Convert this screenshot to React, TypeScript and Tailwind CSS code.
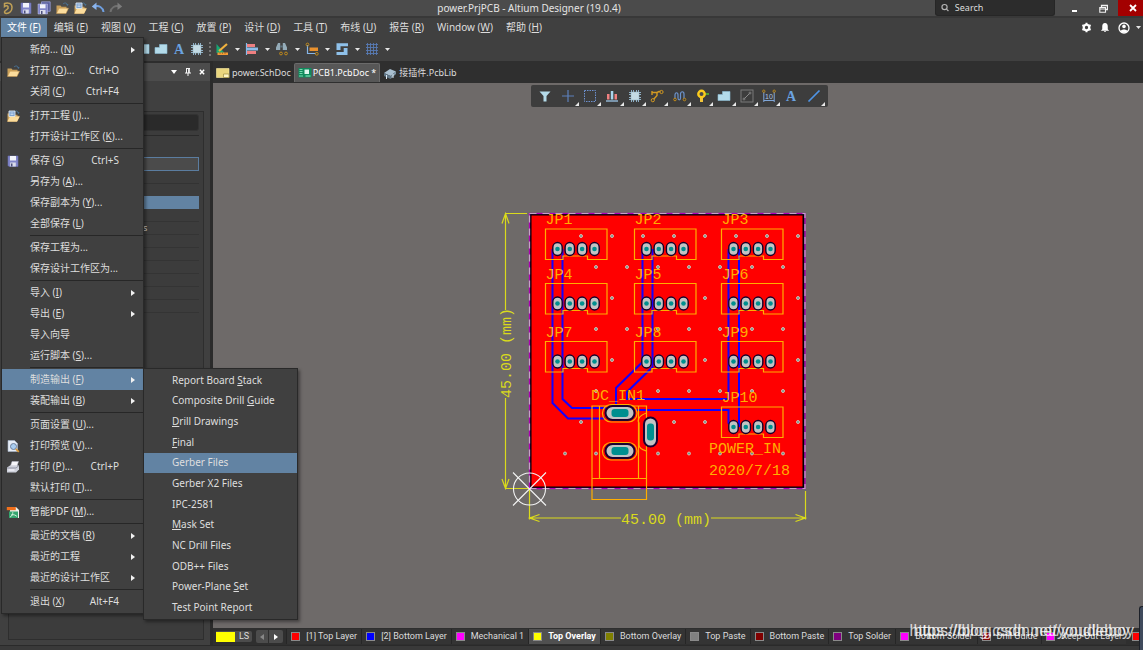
import React from "react";

type Item = { label: string; keys?: string; icon?: string; sub?: boolean; active?: boolean };

const FILE_GROUPS: Item[][] = [
  [
    { label: "新的... (&N)", sub: true },
    { label: "打开 (&O)...", keys: "Ctrl+O", icon: "open" },
    { label: "关闭 (&C)", keys: "Ctrl+F4" },
  ],
  [{ label: "打开工程 (&J)...", icon: "project" }, { label: "打开设计工作区 (&K)..." }],
  [
    { label: "保存 (&S)", keys: "Ctrl+S", icon: "save" },
    { label: "另存为 (&A)..." },
    { label: "保存副本为 (&Y)..." },
    { label: "全部保存 (&L)" },
  ],
  [{ label: "保存工程为..." }, { label: "保存设计工作区为..." }],
  [
    { label: "导入 (&I)", sub: true },
    { label: "导出 (&E)", sub: true },
    { label: "导入向导" },
    { label: "运行脚本 (&S)..." },
  ],
  [
    { label: "制造输出 (&F)", sub: true, active: true },
    { label: "装配输出 (&B)", sub: true },
  ],
  [
    { label: "页面设置 (&U)..." },
    { label: "打印预览 (&V)...", icon: "preview" },
    { label: "打印 (&P)...", keys: "Ctrl+P", icon: "print" },
    { label: "默认打印 (&T)..." },
  ],
  [{ label: "智能PDF (&M)...", icon: "pdf" }],
  [
    { label: "最近的文档 (&R)", sub: true },
    { label: "最近的工程", sub: true },
    { label: "最近的设计工作区", sub: true },
  ],
  [{ label: "退出 (&X)", keys: "Alt+F4" }],
];

const FAB_ITEMS = [
  "Report Board &Stack",
  "Composite Drill &Guide",
  "&Drill Drawings",
  "&Final",
  "Gerber Files",
  "Gerber X2 Files",
  "IPC-2581",
  "&Mask Set",
  "NC Drill Files",
  "ODB++ Files",
  "Power-Plane &Set",
  "Test Point Report",
];

const MENUS = [
  "编辑 (&E)",
  "视图 (&V)",
  "工程 (&C)",
  "放置 (&P)",
  "设计 (&D)",
  "工具 (&T)",
  "布线 (&U)",
  "报告 (&R)",
  "Window (&W)",
  "帮助 (&H)",
];

const LAYERS = [
  { name: "[1] Top Layer", box: "bg-[#ff0000]" },
  { name: "[2] Bottom Layer", box: "bg-[#0000ff]" },
  { name: "Mechanical 1", box: "bg-[#ff00ff]" },
  { name: "Top Overlay", box: "bg-[#ffff00]", active: true },
  { name: "Bottom Overlay", box: "bg-[#808000]" },
  { name: "Top Paste", box: "bg-[#808080]" },
  { name: "Bottom Paste", box: "bg-[#800000]" },
  { name: "Top Solder", box: "bg-[#800080]" },
  { name: "Bottom Solder", box: "bg-[#ff00ff]" },
  { name: "Drill Guide", box: "bg-[#800000]" },
  { name: "Keep-Out Layer", box: "bg-[#ff00ff]" },
];

function Label({ text }: { text: string }) {
  const i = text.indexOf("&");
  if (i < 0) return <>{text}</>;
  return (
    <>
      {text.slice(0, i)}
      <span className="underline underline-offset-1">{text[i + 1]}</span>
      {text.slice(i + 2)}
    </>
  );
}

function Icon({ name, className = "size-[14px]" }: { name: string; className?: string }) {
  return (
    <svg viewBox="0 0 14 14" className={`shrink-0 ${className}`} fill="none" aria-hidden="true">
      {ICONS[name]}
    </svg>
  );
}

const folder = (
  <>
    <path d="M1.5 12V4.5h4l1 1.2h5V8" fill="#c9a05a" />
    <path d="M1.5 12.5 4 7.2h9.5L11 12.5z" fill="#fbdc9c" stroke="#c9974c" strokeWidth=".5" />
    <path d="M8 3c2-1.800 4-1 4.500 1" stroke="#4a7396" />
    <path d="m11 3.500 1.700 1.600.8-2.200z" fill="#4a7396" />
  </>
);
const floppy = (
  <>
    <path d="M2 2h10v10.500H3L2 11.500z" fill="#8185c9" stroke="#6a6fae" strokeWidth=".6" />
    <path d="M4 2h6v4.500H4z" fill="#f3f4fb" />
    <path d="M4.200 8.500h5.600v4H4.200z" fill="#dadcea" />
    <path d="M5 9.500h1.500v3H5z" fill="#4b4f7d" />
  </>
);
const chip = (
  <>
    <path
      d="M3.500 1v12M5.500 1v12M8.500 1v12M10.500 1v12M1 3.500h12M1 5.500h12M1 8.500h12M1 10.500h12"
      stroke="#8fb0c6"
      strokeWidth="1"
    />
    <rect x="2.800" y="2.800" width="8.400" height="8.400" rx="1" fill="#a9c6d4" />
    <rect x="3.500" y="3.500" width="7" height="7" fill="#c4dbe4" />
  </>
);
const poly = <path d="M1 5.500h4.500V2.500h7.500v9H1z" fill="#b4dbea" stroke="#8fc0d6" strokeWidth=".6" />;
const letterA = (
  <text
    x="7"
    y="12"
    textAnchor="middle"
    fontSize="14"
    fontWeight="bold"
    fill="#6ba3e0"
    fontFamily="Liberation Serif, serif"
  >
    A
  </text>
);

const ICONS: Record<string, React.ReactNode> = {
  open: folder,
  project: (
    <>
      {folder}
      <path d="M3 2h6v5.500H3z" fill="#7aa0cf" stroke="#dfe9f5" strokeWidth=".9" />
      <path d="M4.500 4h3M4.500 5.600h3" stroke="#e8f0fa" strokeWidth=".7" />
      <path d="M1.500 12.500 4 7.800h9.500L11 12.500z" fill="#fbdc9c" />
    </>
  ),
  save: floppy,
  saveAll: (
    <>
      <path d="M4.500.8h8.700v9.500H4.500z" fill="#5a5f9c" stroke="#a2a6de" strokeWidth=".7" />
      <path d="M1 3h9.500v10H1z" fill="#8185c9" stroke="#c2c4ea" strokeWidth=".5" />
      <path d="M3 3.300h5.500v4H3z" fill="#f3f4fb" />
      <path d="M3 9h5.500v4H3z" fill="#dadcea" />
      <path d="M4 10h1.500v3H4z" fill="#4b4f7d" />
    </>
  ),
  logo: (
    <path
      d="M3.500 2.500C7 1 11 2.500 11 6.500c0 3.500-2.500 6-5.500 6C3.500 12.500 3 11 4 10l3-2.500V5.500c-.5-1-2.500-1-3.500 0z"
      stroke="#bfa057"
      strokeWidth="1.500"
    />
  ),
  undo: (
    <>
      <path d="M3 5.500c5-1.500 9 1 9.500 5.500" stroke="#6f9fe0" strokeWidth="2" />
      <path d="M.8 5.500 5.500 1.500v7.500z" fill="#8bb4ec" />
    </>
  ),
  redo: (
    <>
      <path d="M11 5.500c-5-1.500-9 1-9.500 5.500" stroke="#707070" strokeWidth="2" />
      <path d="M13.200 5.500 8.500 1.500v7.500z" fill="#7c7c7c" />
    </>
  ),
  preview: (
    <>
      <path d="M2 1.500h6.500l3 3v8H2z" fill="#e6edf7" stroke="#a8b5c9" strokeWidth=".6" />
      <circle cx="7.500" cy="7.500" r="3" fill="#a9cdf0" stroke="#6c7f9c" />
      <path d="m9.800 9.800 3 3" stroke="#d99a3a" strokeWidth="1.800" />
    </>
  ),
  print: (
    <>
      <path d="M4.500 6 6 1.500h6.500L11 6z" fill="#f7f7fb" stroke="#b5b7c4" strokeWidth=".5" />
      <path d="M1 7.500 4 5.500h9v4l-3 3H1z" fill="#cfd2dc" />
      <path d="M1 8h9l3-2.500" stroke="#7d8090" strokeWidth=".7" />
      <path d="M2.500 10h6" stroke="#f8f8ff" strokeWidth="1.200" />
    </>
  ),
  pdf: (
    <>
      <path d="M4 2h6l3 3v8H4z" fill="#eef3f0" />
      <path d="M0.800 2h9v3.200h-9z" fill="#f0701d" />
      <rect x="3" y="6.500" width="9" height="6.500" fill="#36a56f" />
      <path d="M4 12c3-1 3-5 2.500-5M5 10c3-1 5 .5 6 1.500" stroke="#d5f5e0" />
    </>
  ),
  poly,
  letterA,
  chip,
  draw: (
    <>
      <path d="M1.500 2v9h8z" fill="#18a774" />
      <path d="m4 9 8-7" stroke="#f0b13e" strokeWidth="2.200" />
      <path d="M2.500 10.500h10.500v2.500H2.500z" fill="#f29a35" />
      <path d="M5 10.500v1.300M7.500 10.500v1.300M10 10.500v1.300" stroke="#7e4a12" strokeWidth=".7" />
    </>
  ),
  align: (
    <>
      <path d="M1.500 1v12" stroke="#85bcec" strokeWidth="1.200" />
      <path d="M2 2h8v3H2zM2 9h9v3H2z" fill="#ee7f80" />
      <path d="M2 5.500h11v3H2z" fill="#8dbce8" />
    </>
  ),
  find: (
    <>
      <path d="M3 1h2.200v7H1V5.500zM7.800 1H10l2 4.500V8H7.800z" fill="#94abb8" />
      <path d="M5.200 3.500h2.600v2H5.200z" fill="#5f7480" />
      <circle cx="6" cy="11.500" r="1.400" stroke="#c08a1b" />
      <circle cx="11" cy="11.500" r="1.400" stroke="#c08a1b" />
    </>
  ),
  dim: (
    <>
      <path d="M2.500 3v8.500h8" stroke="#86b5e6" strokeWidth="1.200" />
      <path d="M4.500 5.500h8.500v3.500H4.500z" fill="#e9912e" />
      <circle cx="2.500" cy="2.500" r="1.400" stroke="#c08a1b" />
      <circle cx="11.800" cy="11.800" r="1.400" stroke="#c08a1b" />
    </>
  ),
  room: (
    <>
      <path d="M1.500 1.200h11.500v3H5.500V8h-4z" fill="#8fc1ea" />
      <path d="M12.500 13H1.500v-3h7.200V6h3.800z" fill="#8fc1ea" />
    </>
  ),
  grid: (
    <path
      d="M2.500 1v12M5.500 1v12M8.500 1v12M11.500 1v12M1 2.500h12M1 5.500h12M1 8.500h12M1 11.500h12"
      stroke="#587bb4"
      strokeWidth=".9"
    />
  ),
  sch: (
    <>
      <path d="M.5 2.500h12.500v9H.500z" fill="#ead67e" stroke="#fff0a5" strokeWidth=".6" />
      <path d="M7.500 8H13v3.500H7.500z" fill="#fff6c4" stroke="#9b8a3e" strokeWidth=".7" />
    </>
  ),
  pcb: (
    <>
      <path d="M.5 2h13v9.500H.5z" fill="#108a5c" />
      <path d="M1.500 3.500h3M1.500 5.500h3M1.500 7.500h3M2 9v2M4 9v2" stroke="#8ff0c4" strokeWidth=".8" />
      <path d="M6.500 3.500H11V8H6.500z" fill="#dff7ee" />
      <path d="M7.500 10h5" stroke="#8ff0c4" />
    </>
  ),
  lib: (
    <>
      <path d="m1 7 6-4 6 2.500L7.500 10z" fill="#a9bfd0" />
      <path d="m1 7 6.500 3v3L1 10z" fill="#5f7688" />
      <path d="M7.500 10 13 5.500V8l-5.500 5z" fill="#7e96a8" />
      <path d="M3.500 9v4M10 8v4" stroke="#dbe8f2" />
    </>
  ),
  funnel: <path d="M1.500 2.500h11L8.500 7v5.500h-3V7z" fill="#b4dbea" />,
  plus: <path d="M7 1v12M1 7h12" stroke="#5d80bb" strokeWidth="1.200" />,
  marquee: <rect x="1.500" y="1.500" width="11" height="11" stroke="#6d90cf" strokeDasharray="1.500 1" />,
  bars: (
    <>
      <path d="M2 5h2.500v5.500H2zM9.500 5H12v5.500H9.500z" fill="#f08080" />
      <path d="M5.800 2h2.500v8.500H5.800z" fill="#a9d5ee" />
      <path d="M1 12h12" stroke="#9cc6e8" strokeWidth="1.300" />
    </>
  ),
  route: (
    <>
      <path d="M2 3.500h5L9 2.500h2M3.500 10.500 7 6.500V3.500M2 2v4" stroke="#d39a22" strokeWidth="1.400" />
      <circle cx="2.800" cy="11.200" r="1.600" stroke="#d39a22" fill="#3d3d3d" />
      <circle cx="11.500" cy="3" r="1.600" stroke="#d39a22" fill="#3d3d3d" />
    </>
  ),
  wave: (
    <>
      <path d="M2 10V6c0-3 3-3 3 0v3c0 2.500 2.500 2.500 2.500 0V5c0-3 3.500-3 3.500 0v5" stroke="#6c93cc" strokeWidth="1.200" />
      <circle cx="2" cy="10.500" r="1.300" stroke="#c08a1b" fill="#3d3d3d" />
      <circle cx="11.500" cy="10.500" r="1.300" stroke="#c08a1b" fill="#3d3d3d" />
    </>
  ),
  via: (
    <>
      <path d="M8 5h6" stroke="#55b535" strokeWidth="1.600" />
      <path d="M5 7h3v6H5z" fill="#f3c63b" />
      <circle cx="6.500" cy="5" r="3.200" stroke="#fccc1c" strokeWidth="2.400" fill="#4a4a4a" />
    </>
  ),
  keepout: (
    <>
      <rect x="1" y="1" width="12" height="12" stroke="#7a7a7a" />
      <path d="m4.500 9.500 5-5" stroke="#8a8a8a" />
      <circle cx="4" cy="10" r="1" stroke="#8a8a8a" strokeWidth=".8" />
      <circle cx="10" cy="4" r="1" stroke="#8a8a8a" strokeWidth=".8" />
    </>
  ),
  measure: (
    <>
      <path d="M1.800 3v10M12.200 3v10M1.800 11.500h10.400" stroke="#7fa6d8" />
      <circle cx="1.800" cy="2.200" r="1.200" stroke="#c08a1b" strokeWidth=".9" />
      <circle cx="12.200" cy="2.200" r="1.200" stroke="#c08a1b" strokeWidth=".9" />
      <text x="7" y="9.500" textAnchor="middle" fontSize="7" fill="#a8c4e8" fontFamily="Liberation Sans, sans-serif">
        10
      </text>
    </>
  ),
  line: <path d="M1.500 12.500l11-11" stroke="#4f94e6" strokeWidth="1.700" />,
};

const Caret = () => (
  <svg viewBox="0 0 5 3" className="h-[3px] w-[5px] shrink-0" aria-hidden="true">
    <path d="M0 0h5L2.500 3z" fill="#e6e6e6" />
  </svg>
);

function TitleBar() {
  const tools: [string, string][] = [
    ["logo", "Altium"],
    ["save", "保存"],
    ["saveAll", "全部保存"],
    ["open", "打开"],
    ["project", "打开工程"],
    ["undo", "撤销"],
    ["redo", "重做"],
  ];
  return (
    <header className="flex h-4 items-center bg-[#4b4b4b] text-[10px] text-[#e4e4e4]">
      <div className="flex gap-1 pl-px">
        {tools.map(([icon, name]) => (
          <button key={name} aria-label={name} className="flex">
            <Icon name={icon} />
          </button>
        ))}
      </div>
      <h1 className="flex-1 text-center leading-4">power.PrjPCB - Altium Designer (19.0.4)</h1>
      <label className="mr-[5px] flex h-4 w-[120px] items-center gap-[6px] rounded-b-[3px] border border-t-0 border-[#262626] bg-[#2c2c2c] px-[5px]">
        <svg viewBox="0 0 10 10" className="size-[9px]" fill="none" aria-hidden="true">
          <circle cx="4.500" cy="4.500" r="3.300" stroke="#b5b5b5" strokeWidth="1.500" />
          <path d="m7 7 2.500 2.500" stroke="#b5b5b5" strokeWidth="1.500" />
        </svg>
        <input
          aria-label="Search"
          placeholder="Search"
          className="w-full min-w-0 bg-transparent text-[9px] leading-[14px] outline-none placeholder:text-[#dcdcdc]"
        />
      </label>
      <button aria-label="Minimize" className="flex h-4 w-[29px] items-end justify-center pb-1">
        <span className="h-[2px] w-[5px] bg-white" />
      </button>
      <button aria-label="Restore" className="flex h-4 w-[29px] items-center justify-center">
        <svg viewBox="0 0 9 9" className="size-[9px]" fill="none" stroke="#f2f2f2" aria-hidden="true">
          <path d="M2.500 3V1.500h6v4H7" strokeWidth="1.300" />
          <path d="M.800 3.500h5.700v4.700H.800z" strokeWidth="1.100" />
          <path d="M.800 5h5.700" />
        </svg>
      </button>
      <button aria-label="Close" className="flex h-4 w-[25px] items-center justify-center bg-[#a30000]">
        <svg viewBox="0 0 8 8" className="mr-[-4px] size-2" stroke="#fff" strokeWidth="1.800" aria-hidden="true">
          <path d="m1 1 6 6M7 1 1 7" />
        </svg>
      </button>
    </header>
  );
}

function FabricationMenu() {
  return (
    <div
      role="menu"
      className="absolute -top-px left-full z-20 grid h-[252px] w-[155px] auto-rows-fr border border-[#292929] bg-[#404040] py-px shadow-[2px_2px_3px_rgba(0,0,0,0.4)]"
    >
      {FAB_ITEMS.map((t) => (
        <button
          key={t}
          role="menuitem"
          className={`flex items-center pl-7 text-left ${t === "Gerber Files" ? "bg-[#6283a3]" : ""}`}
        >
          <span>
            <Label text={t} />
          </span>
        </button>
      ))}
    </div>
  );
}

function FileMenu() {
  return (
    <div
      role="menu"
      className="absolute left-0 top-full z-10 w-[143px] border border-[#292929] bg-[#404040] py-px text-[#dedede] shadow-[2px_2px_3px_rgba(0,0,0,0.4)]"
    >
      {FILE_GROUPS.map((group, gi) => (
        <div key={gi}>
          {gi > 0 && <div className="my-px ml-7 h-px bg-[#272727]" />}
          {group.map((it) => (
            <div key={it.label} className="relative">
              <button
                role="menuitem"
                className={`flex h-[21px] w-full items-center pr-2 text-left ${it.active ? "bg-[#6283a3]" : ""}`}
              >
                <span className="flex w-7 pl-1">{it.icon && <Icon name={it.icon} />}</span>
                <span className="flex-1 whitespace-nowrap">
                  <Label text={it.label} />
                </span>
                {it.keys && <span className="pr-4">{it.keys}</span>}
                {it.sub && (
                  <svg viewBox="0 0 4 6" className="h-[6px] w-1" aria-hidden="true">
                    <path d="M0 0v6l4-3z" fill="#f2f2f2" />
                  </svg>
                )}
              </button>
              {it.active && <FabricationMenu />}
            </div>
          ))}
        </div>
      ))}
    </div>
  );
}

function MenuBar() {
  return (
    <nav className="flex h-[21px] items-stretch gap-px border-t-2 border-[#383838] bg-[#404040] pl-px text-[10px] text-[#dedede]">
      <div className="relative">
        <button className="h-[19px] bg-[#6283a3] px-[6px] text-white">
          <Label text="文件 (&F)" />
        </button>
        <FileMenu />
      </div>
      {MENUS.map((m) => (
        <button key={m} className="px-[6px] whitespace-nowrap">
          <Label text={m} />
        </button>
      ))}
      <div className="ml-auto flex items-center gap-2 pr-[2px]">
        <button aria-label="Settings">
          <svg viewBox="0 0 12 12" className="size-[11px]" aria-hidden="true">
            <circle cx="6" cy="6" r="3" fill="none" stroke="#fff" strokeWidth="2.400" />
            <path
              d="M6 .8v1.600M6 9.600v1.600M1.500 3.400l1.400.8M9.100 7.800l1.400.8M1.500 8.600l1.400-.8M9.100 4.200l1.400-.8"
              stroke="#fff"
              strokeWidth="2.200"
            />
          </svg>
        </button>
        <button aria-label="Notifications">
          <svg viewBox="0 0 10 12" className="h-[11px] w-[10px]" fill="#fff" aria-hidden="true">
            <path d="M5 1c2 0 3 1.500 3 3.500V8l1.500 1.500H.5L2 8V4.500C2 2.500 3 1 5 1zM4 10h2v1H4z" />
          </svg>
        </button>
        <button aria-label="Account" className="flex items-center gap-[6px]">
          <svg viewBox="0 0 12 12" className="size-3" aria-hidden="true">
            <circle cx="6" cy="6" r="5" fill="none" stroke="#fff" strokeWidth="1.300" />
            <circle cx="6" cy="4.400" r="1.800" fill="#fff" />
            <path d="M2.500 9c1.500-2 5.500-2 7 0C8 11.200 4 11.200 2.500 9z" fill="#fff" />
          </svg>
          <Caret />
        </button>
      </div>
    </nav>
  );
}

function ToolBar() {
  return (
    <div className="flex h-6 items-center bg-[#404040] pl-[136px]">
      <div className="flex gap-1">
        {["poly", "poly", "letterA", "chip"].map((n, i) => (
          <button key={i} aria-label={n} className="flex">
            <Icon name={n} />
          </button>
        ))}
      </div>
      <span className="ml-[5px] mr-1 h-[14px] border-l-2 border-dotted border-[#777]" />
      <div className="flex gap-[3px]">
        {["draw", "align", "find", "dim", "room", "grid"].map((n) => (
          <button key={n} aria-label={n} className="flex w-[27px] items-center justify-between pr-[2px]">
            <Icon name={n} />
            <Caret />
          </button>
        ))}
      </div>
    </div>
  );
}

function SidePanel() {
  return (
    <aside className="flex w-[213px] shrink-0 flex-col border-r-[3px] border-[#2b2b2b] bg-[#404040]">
      <div className="flex h-[20px] items-center justify-end gap-2 border-t-2 border-[#2d2d2d] bg-[#4c4c4c] pr-[5px]">
        <button aria-label="Panel menu">
          <svg viewBox="0 0 6 4" className="h-1 w-[6px]" aria-hidden="true">
            <path d="M0 0h6L3 4z" fill="#fff" />
          </svg>
        </button>
        <button aria-label="Pin panel">
          <svg viewBox="0 0 6 8" className="h-2 w-[6px]" aria-hidden="true">
            <path d="M1 .5h4M1.500.5V5M4.300.5V5M3.600.5V5M0 5h6M3 5v3" stroke="#f5f5f5" fill="none" />
          </svg>
        </button>
        <button aria-label="Close panel">
          <svg viewBox="0 0 7 7" className="size-[6px]" aria-hidden="true">
            <path d="m1 1 5 5M6 1 1 6" stroke="#fff" strokeWidth="1.700" />
          </svg>
        </button>
      </div>
      <div className="mb-[5px] ml-2 mr-[6px] mt-[30px] flex flex-1 flex-col border border-[#2e2e2e] bg-[#3c3c3c] px-1 pt-[2px]">
        <input aria-label="Filter" className="h-[17px] rounded-[3px] border border-[#333] bg-[#2a2a2a]" />
        <div className="mt-1 h-px bg-[#2a2a2a]" />
        <input aria-label="Value" className="mt-[21px] h-[14px] border border-[#5b7da0] bg-[#4b4b4b]" />
        <div className="mt-3 h-px bg-[#333]" />
        <div className="mt-3 h-[13px] bg-[#6283a3]" />
        <div className="mt-3 h-px bg-[#343434]" />
        <div className="h-[13px] border-b border-[#343434] pl-[130px] text-[9px] leading-[12px] text-[#d0d0d0]">s</div>
        {[0, 1, 2, 3, 4, 5].map((i) => (
          <div key={i} className="h-[13px] border-b border-[#343434]" />
        ))}
      </div>
    </aside>
  );
}

function DocTabs() {
  const tabs = [
    { icon: "sch", name: "power.SchDoc" },
    { icon: "pcb", name: "PCB1.PcbDoc *", active: true },
    { icon: "lib", name: "接插件.PcbLib" },
  ];
  return (
    <div role="tablist" className="flex h-[22px] items-end bg-[#2f2f2f] pb-px pt-[2px] text-[9px] text-[#dcdcdc]">
      {tabs.map((t) => (
        <button
          key={t.name}
          role="tab"
          aria-selected={!!t.active}
          className={`flex h-[19px] items-center px-[3px] whitespace-nowrap ${
            t.active
              ? "gap-px rounded-t-[2px] border border-b-0 border-[#6a6a6a] bg-[#575757] text-white"
              : "gap-[2px]"
          }`}
        >
          <Icon name={t.icon} />
          {t.name}
        </button>
      ))}
    </div>
  );
}

function ActiveBar() {
  const names = [
    "funnel",
    "plus",
    "marquee",
    "bars",
    "chip",
    "route",
    "wave",
    "via",
    "poly",
    "keepout",
    "measure",
    "letterA",
    "line",
  ];
  return (
    <div className="absolute inset-x-0 top-[2px] flex justify-center pl-[3px]">
      <div className="flex h-[22px] w-[297px] rounded-[2px] bg-[#3d3d3d] px-[3px]">
        {names.map((n) => (
          <button key={n} aria-label={n} className="relative flex flex-1 items-center justify-center">
            <Icon name={n} />
            {n !== "funnel" && n !== "letterA" && (
              <svg viewBox="0 0 4 4" className="absolute bottom-px right-0 size-1" aria-hidden="true">
                <path d="M4 0v4H0z" fill="#e8e8e8" />
              </svg>
            )}
          </button>
        ))}
      </div>
    </div>
  );
}

const VIAS: [number, number[]][] = [
  [236, [581, 612, 643, 674, 705, 736, 767, 798]],
  [267, [596, 627, 658, 689, 720, 752, 783]],
  [298, [612, 705, 798]],
  [329, [596, 627, 658, 689, 720, 752, 783]],
  [360, [612, 705, 798]],
  [391, [596, 658, 689, 720, 752, 783]],
  [422, [581, 674, 705, 798]],
  [453.500, [565, 596, 658, 689, 720, 752, 783]],
];

const HEADERS: [string, number, number][] = [
  ["JP1", 545.500, 249],
  ["JP2", 634.500, 249],
  ["JP3", 721.500, 249],
  ["JP4", 545.500, 303.500],
  ["JP5", 634.500, 303.500],
  ["JP6", 721.500, 303.500],
  ["JP7", 545.500, 361.500],
  ["JP8", 634.500, 361.500],
  ["JP9", 721.500, 361.500],
  ["JP10", 721.500, 427],
];

function Slot({ x, y, w, h }: { x: number; y: number; w: number; h: number }) {
  const r = Math.min(w, h) / 2;
  return (
    <g>
      <rect x={x - w / 2} y={y - h / 2} width={w} height={h} rx={r} fill="#c3c3c3" stroke="#1a0030" strokeWidth="2" />
      <rect x={x - w / 2 + 6} y={y - h / 2 + 3} width={w - 12} height={h - 6} rx="3" fill="#008f8f" />
    </g>
  );
}

function Board() {
  const silk = "#ffae00";
  const dim = "#dada1c";
  return (
    <svg className="block size-full" fill="none" role="img" aria-label="PCB layout">
      <g transform="translate(-213 -83)" fontFamily="Liberation Mono, monospace" fontSize="15">
        <rect x="530.500" y="214.500" width="273" height="273" fill="#ff0000" stroke="#000" strokeWidth="2" />
        <rect x="529.500" y="213.500" width="275.500" height="275" stroke="#b000b8" strokeWidth="1.300" />
        <rect x="529.500" y="213.500" width="275.500" height="275" stroke="#c4a4c4" strokeWidth="1.200" strokeDasharray="7 6" />

        <g stroke="#1200ff" strokeWidth="2">
          <path d="M552.500 249v154l15.500 15.500h37" />
          <path d="M562.500 249v150l9.500 9H606" />
          <path d="M642.500 249v113L616 388v18" />
          <path d="M652.500 249v118L627 392v7H728.500V249" />
          <path d="M739 249v178" />
          <path d="M636 410h92.500v13l4 4" />
        </g>

        {VIAS.map(([y, xs]) =>
          xs.map((x) => (
            <circle key={`${x}-${y}`} cx={x} cy={y} r="1.500" fill="#6a9a8a" stroke="#d8b8b0" strokeWidth="1" />
          ))
        )}

        {HEADERS.map(([name, x, y]) => (
          <g key={name}>
            <path d={`M${x} ${y - 20}h61.500v30.500h-19.500v-3.500h-24.500v3.500h-17.500z`} stroke={silk} strokeWidth="1.200" />
            {[12, 24.300, 36.600, 49].map((dx) => (
              <g key={dx}>
                <rect x={x + dx - 4.700} y={y - 6.500} width="9.400" height="13" rx="4.700" fill="#c3c3c3" stroke="#14002a" strokeWidth="1.400" />
                <circle cx={x + dx} cy={y} r="2.300" fill="#008f8f" />
              </g>
            ))}
            <text x={x} y={y - 25} fill={silk}>
              {name}
            </text>
          </g>
        ))}

        <g stroke={silk} strokeWidth="1.200">
          <path d="M592 406h54.500v93.500H592zM592 478.500h54.500M599.500 406v72.500M638.500 406v72.500" />
          <path d="M646.500 413c-9 3-9 8-7.500 10v22c0 4 4 5 7.500 6" />
          <rect x="602.500" y="404.500" width="34.500" height="17.500" rx="8.500" />
          <rect x="602.500" y="442.500" width="34.500" height="17.500" rx="8.500" />
        </g>
        <Slot x={620} y={413} w={29} h={14} />
        <Slot x={620} y={451} w={29} h={14} />
        <rect x="644" y="417.500" width="13" height="29" rx="6.500" fill="#c3c3c3" stroke="#1a0030" strokeWidth="2" />
        <rect x="647" y="423.500" width="7" height="17" rx="3" fill="#008f8f" />
        <text x="591" y="400" fill={silk}>
          DC_IN1
        </text>
        <text x="709" y="453" fill={silk}>
          POWER_IN
        </text>
        <text x="709" y="475" fill={silk}>
          2020/7/18
        </text>

        <g stroke={dim} strokeWidth="1.200">
          <path d="M505 213.500h22M505.500 214v96M505.500 398v90M505 488.500h24M502 223.500l3.500-10 3.500 10M502 479l3.500 9.500 3.500-9.500" />
          <path d="M529.500 489v30.500M805.500 491v28.500M530 518h91M711 518h94M539.500 514.500l-10 3.500 10 3.500M795.500 514.500l10 3.500-10 3.500" />
        </g>
        <text x="621" y="524" fill={dim}>
          45.00 (mm)
        </text>
        <text transform="translate(511 398) rotate(-90)" fill={dim}>
          45.00 (mm)
        </text>

        <g stroke="#f2f2f2" strokeWidth="1.100">
          <circle cx="529.500" cy="489" r="16" />
          <path d="m513 472.500 33 33M546 472.500l-33 33" />
        </g>
      </g>
    </svg>
  );
}

function LayerBar() {
  return (
    <div className="flex h-[17px] items-center overflow-hidden bg-[#2f2f2f] pl-[3px] font-['Roboto',sans-serif] text-[9px] whitespace-nowrap text-[#dcdcdc]">
      <button className="flex h-[11px] shrink-0 items-center rounded-r-[2px] bg-[#4c4c4c]">
        <span className="mr-1 h-[10px] w-[19px] bg-[#ffff00]" />
        <span className="pr-[3px] leading-[11px]">LS</span>
      </button>
      <div className="ml-1 mr-[3px] flex h-[13px] shrink-0 overflow-hidden rounded-[2px] bg-[#4c4c4c]">
        <button aria-label="Previous layer" className="flex w-[13px] items-center justify-center border-r border-[#2f2f2f]">
          <svg viewBox="0 0 4 6" className="h-[6px] w-1" aria-hidden="true">
            <path d="M4 0v6L0 3z" fill="#888" />
          </svg>
        </button>
        <button aria-label="Next layer" className="flex w-[14px] items-center justify-center">
          <svg viewBox="0 0 4 6" className="h-[6px] w-1" aria-hidden="true">
            <path d="M0 0v6l4-3z" fill="#fff" />
          </svg>
        </button>
      </div>
      {LAYERS.map((l) => (
        <button
          key={l.name}
          className={`flex h-[15px] shrink-0 items-center gap-[6px] border-l border-[#262626] pl-1 pr-1 ${
            l.active ? "bg-[#505050] font-bold text-white" : "bg-[#343434]"
          }`}
        >
          <span className={`size-[9px] border border-[#8a8a8a] ${l.box}`} />
          <span>{l.name}</span>
        </button>
      ))}
      <span className="ml-[6px] size-[9px] shrink-0 border border-[#8a8a8a] bg-[#ff0000]" />
    </div>
  );
}

export default function App() {
  return (
    <div className="relative flex min-h-screen flex-col overflow-hidden bg-[#393939] font-['Noto_Sans','Noto_Sans_CJK_SC',sans-serif]">
      <TitleBar />
      <MenuBar />
      <ToolBar />
      <div className="flex flex-1 items-stretch">
        <SidePanel />
        <main className="flex min-w-0 flex-1 flex-col">
          <DocTabs />
          <div className="relative min-h-0 flex-1 bg-[#6e6a69]">
            <div className="absolute inset-0">
              <Board />
            </div>
            <ActiveBar />
          </div>
          <LayerBar />
        </main>
      </div>
      <div className="h-[5px] border-t border-[#2a2a2a] bg-[#393939]" />
      <div className="pointer-events-none absolute bottom-[9px] right-[13px] font-['Liberation_Sans',sans-serif] text-base leading-5 text-white/75">
        <span>https://blog.csdn.net/youdleboy</span>
        <span className="absolute bottom-0 right-[-4px] whitespace-nowrap">https://blog.csdn.net/youdleboy</span>
      </div>
      <div className="absolute bottom-0 right-0 h-11 w-1 rounded-tl-[3px] border-l border-t border-[#1c2028] bg-[#3f4a5c]" />
    </div>
  );
}
